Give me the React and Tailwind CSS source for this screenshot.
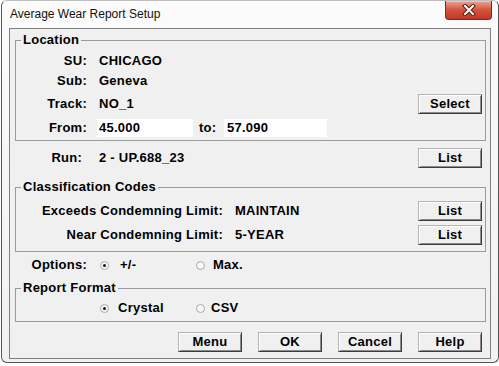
import React from 'react'

const btn =
  'h-[20px] w-[64px] shrink-0 bg-[#f0f0f0] border border-t-[#b4b4b4] border-l-[#b4b4b4] border-r-[#3c3c3c] border-b-[#3c3c3c] shadow-[inset_1px_1px_0_#ffffff,inset_-1px_-1px_0_#8c8c8c] flex items-center justify-center text-[13px] font-bold tracking-[0.25px] text-black'

function Btn({ children }) {
  return <div className={btn}>{children}</div>
}

function Radio({ checked }) {
  return (
    <span className="w-[9px] h-[9px] shrink-0 rounded-full border border-[#a8a8a8] bg-[#f7f7f7] flex items-center justify-center">
      {checked && <span className="w-[3px] h-[3px] rounded-full bg-[#111]" />}
    </span>
  )
}

function Group({ title, className = '', children }) {
  return (
    <fieldset className={`ml-[5px] w-[471px] border border-[#9b9b9b] ${className}`}>
      <legend className="ml-[5px] px-[2px] leading-[16px]">{title}</legend>
      {children}
    </fieldset>
  )
}

function CloseButton() {
  return (
    <div className="mr-[6px] h-[19px] w-[47px] self-start rounded-b-[4px] border border-t-0 border-[#7b2a1e] bg-gradient-to-b from-[#e8a395] via-[#d2533b] to-[#c0392b] shadow-[inset_0_1px_0_rgba(255,255,255,0.4)] flex items-center justify-center">
      <svg width="14" height="12" viewBox="0 0 14 12">
        <path d="M3 2 L11 10 M11 2 L3 10" stroke="#5a1a12" strokeWidth="4" strokeLinecap="square" />
        <path d="M3 2 L11 10 M11 2 L3 10" stroke="#ffffff" strokeWidth="2" strokeLinecap="square" />
      </svg>
    </div>
  )
}

export default function App() {
  return (
    <div className="w-[499px] h-[366px] bg-white font-['Liberation_Sans',Arial,sans-serif] overflow-hidden">
      <div className="ml-[1px] w-[498px] h-[363px] border border-[#555] border-t-[#bdbdbd] rounded-t-[6px] rounded-b-[6px] bg-gradient-to-b from-[#fbfbfb] to-[#f1f1f1] flex flex-col">
        <div className="h-[27px] flex items-center justify-between shrink-0">
          <span className="pl-[8px] pb-[1px] text-[12px] text-[#111]">Average Wear Report Setup</span>
          <CloseButton />
        </div>

        <div className="ml-[7px] w-[482px] h-[331px] border border-[#808080] bg-[#f0f0f0] text-[13px] font-bold tracking-[0.25px] text-black">
          <Group title="Location" className="mt-[3px] pb-[3px]">
            <div className="pt-[3px]">
              <div className="h-[20px] flex items-center">
                <span className="w-[71px] text-right">SU:</span>
                <span className="ml-[12px]">CHICAGO</span>
              </div>
              <div className="h-[20px] flex items-center">
                <span className="w-[71px] text-right">Sub:</span>
                <span className="ml-[12px]">Geneva</span>
              </div>
              <div className="mt-[3px] h-[20px] flex items-center pr-[3px]">
                <span className="w-[71px] text-right">Track:</span>
                <span className="ml-[12px] flex-1">NO_1</span>
                <Btn>Select</Btn>
              </div>
              <div className="mt-[5px] h-[18px] flex items-center">
                <span className="w-[71px] text-right">From:</span>
                <span className="ml-[10px] w-[96px] h-[18px] bg-white pl-[2px] flex items-center">45.000</span>
                <span className="ml-[6px] w-[25px]">to:</span>
                <span className="w-[103px] h-[18px] bg-white pl-[3px] flex items-center">57.090</span>
              </div>
            </div>
          </Group>

          <div className="mt-[7px] h-[20px] flex items-center pr-[8px]">
            <span className="w-[72px] text-right">Run:</span>
            <span className="ml-[17px] flex-1">2 - UP.688_23</span>
            <Btn>List</Btn>
          </div>

          <Group title="Classification Codes" className="mt-[11px] pb-[6px]">
            <div className="pt-[6px]">
              <div className="h-[20px] flex items-center pr-[3px]">
                <span className="w-[207px] text-right">Exceeds Condemning Limit:</span>
                <span className="ml-[12px] flex-1">MAINTAIN</span>
                <Btn>List</Btn>
              </div>
              <div className="mt-[4px] h-[20px] flex items-center pr-[3px]">
                <span className="w-[207px] text-right">Near Condemning Limit:</span>
                <span className="ml-[12px] flex-1">5-YEAR</span>
                <Btn>List</Btn>
              </div>
            </div>
          </Group>

          <div className="mt-[3px] h-[20px] flex items-center">
            <span className="w-[77px] text-right">Options:</span>
            <div className="ml-[13px] w-[96px] flex items-center">
              <Radio checked />
              <span className="ml-[11px]">+/-</span>
            </div>
            <Radio />
            <span className="ml-[8px]">Max.</span>
          </div>

          <Group title="Report Format" className="mt-[5px] pb-[3px]">
            <div className="pt-[2px] h-[22px] flex items-center">
              <div className="ml-[84px] w-[96px] flex items-center">
                <Radio checked />
                <span className="ml-[9px]">Crystal</span>
              </div>
              <Radio />
              <span className="ml-[6px]">CSV</span>
            </div>
          </Group>

          <div className="mt-[10px] flex justify-end gap-[16px] pr-[8px]">
            <Btn>Menu</Btn>
            <Btn>OK</Btn>
            <Btn>Cancel</Btn>
            <Btn>Help</Btn>
          </div>
        </div>
      </div>
    </div>
  )
}
